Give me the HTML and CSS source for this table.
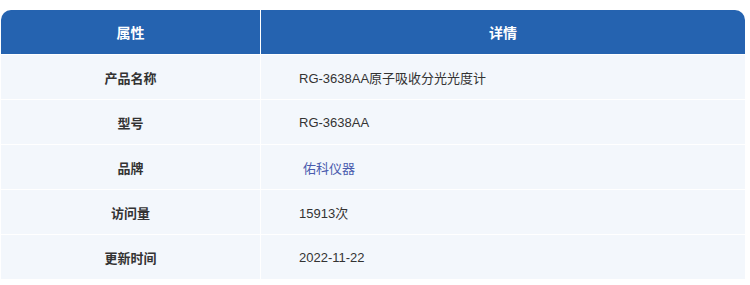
FILE: index.html
```html
<!DOCTYPE html>
<html lang="zh-CN">
<head>
<meta charset="utf-8">
<link rel="stylesheet" href="styles.css">
</head>
<body>
<div class="wrap">
  <table class="spec">
    <thead>
      <tr><th class="c1">属性</th><th class="c2">详情</th></tr>
    </thead>
    <tbody>
      <tr><td class="label">产品名称</td><td class="val">RG-3638AA原子吸收分光光度计</td></tr>
      <tr><td class="label">型号</td><td class="val">RG-3638AA</td></tr>
      <tr><td class="label">品牌</td><td class="val"><a class="brand">佑科仪器</a></td></tr>
      <tr><td class="label">访问量</td><td class="val">15913次</td></tr>
      <tr><td class="label">更新时间</td><td class="val">2022-11-22</td></tr>
    </tbody>
  </table>
</div>
</body>
</html>
```
FILE: styles.css
```css
html, body { margin: 0; padding: 0; background: #fff; }
body {
  font-family: "Liberation Sans", Arial, "Noto Sans CJK SC", sans-serif;
  color: #333;
}
.wrap { padding: 10px 5px 0 1px; }
.spec {
  width: 744px;
  border-collapse: separate;
  border-spacing: 0;
  table-layout: fixed;
}
.spec th {
  background: #2563b0;
  color: #fff;
  font-size: 14px;
  font-weight: bold;
  height: 44px;
  padding: 0;
  text-align: center;
}
.spec th.c1 { width: 259px; border-right: 1px solid #fff; border-top-left-radius: 10px; }
.spec th.c2 { border-top-right-radius: 10px; }
.spec td {
  background: #f3f7fc;
  height: 44px;
  padding: 0;
  font-size: 13px;
  border-top: 1px solid #fff;
}
.spec td.label {
  text-align: center;
  font-weight: bold;
  border-right: 1px solid #fff;
}
.spec td.val { padding-left: 38px; }
.brand { color: #4a5cae; padding-left: 4px; text-decoration: none; }
```
